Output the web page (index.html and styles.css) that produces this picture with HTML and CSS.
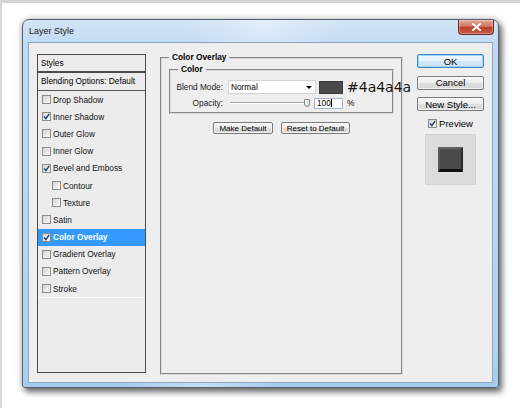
FILE: index.html
```html
<!DOCTYPE html>
<html lang="en">
<head>
<meta charset="utf-8">
<title>Layer Style</title>
<link rel="stylesheet" href="styles.css">
</head>
<body>
<div class="desk">
  <div class="window">
    <div class="titlebar">
      <span class="title">Layer Style</span>
      <button class="close" aria-label="Close">
        <svg width="11" height="8" viewBox="0 0 11 8"><path d="M2 1 L9 7 M9 1 L2 7" stroke="#fff" stroke-width="2" stroke-linecap="square"/></svg>
      </button>
    </div>
    <div class="client">
      <div class="styles">
        <div class="styles-head">Styles</div>
        <div class="styles-blend">Blending Options: Default</div>
        <ul class="effects">
          <li class="effect"><span class="check"></span>Drop Shadow</li>
          <li class="effect"><span class="check"><svg viewBox="0 0 7 7" width="7" height="7"><path d="M1 3.6 L2.9 5.6 L6.2 0.8" fill="none" stroke="#1d3f70" stroke-width="1.4"/></svg></span>Inner Shadow</li>
          <li class="effect"><span class="check"></span>Outer Glow</li>
          <li class="effect"><span class="check"></span>Inner Glow</li>
          <li class="effect"><span class="check"><svg viewBox="0 0 7 7" width="7" height="7"><path d="M1 3.6 L2.9 5.6 L6.2 0.8" fill="none" stroke="#1d3f70" stroke-width="1.4"/></svg></span>Bevel and Emboss</li>
          <li class="effect sub"><span class="check"></span>Contour</li>
          <li class="effect sub"><span class="check"></span>Texture</li>
          <li class="effect"><span class="check"></span>Satin</li>
          <li class="effect selected"><span class="check"><svg viewBox="0 0 7 7" width="7" height="7"><path d="M1 3.6 L2.9 5.6 L6.2 0.8" fill="none" stroke="#1d3f70" stroke-width="1.4"/></svg></span>Color Overlay</li>
          <li class="effect"><span class="check"></span>Gradient Overlay</li>
          <li class="effect"><span class="check"></span>Pattern Overlay</li>
          <li class="effect"><span class="check"></span>Stroke</li>
        </ul>
      </div>

      <fieldset class="group overlay">
        <legend>Color Overlay</legend>
        <fieldset class="group color">
          <legend>Color</legend>
          <div class="field">
            <span class="field-label">Blend Mode:</span>
            <div class="select"><span>Normal</span><span class="caret"></span></div>
            <span class="swatch"></span>
            <span class="hex">#4a4a4a</span>
          </div>
          <div class="field field-slim">
            <span class="field-label">Opacity:</span>
            <div class="slider"><span class="slider-track"></span><span class="slider-thumb"></span></div>
            <div class="num">100<span class="caret-line"></span></div>
            <span class="unit">%</span>
          </div>
        </fieldset>
        <div class="defaults">
          <button class="btn btn-make">Make Default</button>
          <button class="btn btn-reset">Reset to Default</button>
        </div>
      </fieldset>

      <div class="actions">
        <button class="btn btn-lg btn-default">OK</button>
        <button class="btn btn-lg">Cancel</button>
        <button class="btn btn-lg">New Style...</button>
        <label class="preview-toggle"><span class="check"><svg viewBox="0 0 7 7" width="7" height="7"><path d="M1 3.6 L2.9 5.6 L6.2 0.8" fill="none" stroke="#1d3f70" stroke-width="1.4"/></svg></span>Preview</label>
        <div class="preview"><span class="preview-chip"></span></div>
      </div>
    </div>
  </div>
</div>
</body>
</html>
```

FILE: styles.css
```css
* {
  box-sizing: border-box;
}

html,
body {
  margin: 0;
}

body {
  width: 520px;
  height: 408px;
  overflow: hidden;
  background: #fff;
  font-family: "Liberation Sans", Arial, sans-serif;
  font-size: 8.3px;
  color: #000;
}

.desk {
  height: 408px;
  border-top: 3px solid #d6d6d6;
  border-left: 2px solid #d6d6d6;
  padding: 16px 0 0 20px;
}

/* Aero window frame */
.window {
  width: 477px;
  height: 369px;
  display: flex;
  flex-direction: column;
  padding: 0 5px 4px;
  border: 1px solid #55616e;
  border-radius: 7px 7px 3px 3px;
  background:
    linear-gradient(100deg, rgba(255,255,255,0) 30%, rgba(255,255,255,.35) 45%, rgba(255,255,255,0) 60%),
    linear-gradient(#d3e4f5 0, #c2dbf3 22px, #b2d2f0 90%, #a6cbee 100%);
  box-shadow: 3px 4px 6px rgba(0,0,0,.55), 0 0 7px rgba(0,0,0,.25);
}

.titlebar {
  height: 22px;
  margin: 0 -5px;
  padding-left: 6px;
  display: flex;
  align-items: center;
}

.title {
  font-size: 9px;
  color: #1b1b1b;
}

.close {
  align-self: flex-start;
  margin-left: auto;
  margin-right: 4px;
  width: 36px;
  height: 15px;
  padding: 0;
  display: flex;
  align-items: center;
  justify-content: center;
  border: 1px solid #6a2a22;
  border-top: none;
  border-radius: 0 0 4px 4px;
  background: linear-gradient(#e6a896 0, #d17562 45%, #b7412b 52%, #c85b42 100%);
  box-shadow: inset 0 0 0 1px rgba(255,255,255,.3);
}

.client {
  flex: 1;
  display: flex;
  align-items: flex-start;
  padding: 11px 0 0 8px;
  border: 1px solid #8fa6bf;
  background: #eeeeee;
}

/* Styles list */
.styles {
  flex: none;
  width: 109px;
  height: 319px;
  border: 1px solid #4a4a4a;
  background: #ececec;
}

.styles-head {
  height: 18px;
  line-height: 16px;
  padding-left: 3px;
  border-bottom: 2px solid #4a4a4a;
}

.styles-blend {
  height: 18px;
  line-height: 17px;
  padding-left: 3px;
  border-bottom: 1px solid #5a5a5a;
}

.effects {
  list-style: none;
  margin: 0;
  padding: 0;
  border-bottom: 1px solid #fbfbfb;
}

.effect {
  height: 17.2px;
  display: flex;
  align-items: center;
  gap: 2px;
  padding-left: 4px;
  white-space: nowrap;
  color: #111;
}

.effect.sub {
  padding-left: 14px;
}

.effect.selected {
  background: #3399ff;
  color: #fff;
  font-weight: bold;
}

.check {
  flex: none;
  width: 9px;
  height: 9px;
  display: flex;
  align-items: center;
  justify-content: center;
  border: 1px solid #8c8c8c;
  background: linear-gradient(135deg, #d4d4d4, #fbfbfb);
}

.check svg {
  display: block;
}

/* Etched group boxes */
.group {
  margin: 0;
  min-width: 0;
  border: 2px groove #dadada;
}

.group > legend {
  padding: 0 3px;
  line-height: 11px;
  font-weight: bold;
}

.overlay {
  flex: none;
  width: 243px;
  height: 323px;
  margin: -2px 0 0 14px;
  padding: 0 7px;
}

.overlay > legend {
  margin-left: 0;
}

.color {
  margin-top: 1px;
  padding: 5px 0 3px;
}

.color > legend {
  margin-left: 7px;
}

.field {
  display: flex;
  align-items: center;
  height: 14px;
}

.field-slim {
  height: 12px;
  margin-top: 3px;
}

.field-label {
  flex: none;
  width: 52px;
  margin-right: 5px;
  text-align: right;
  color: #222;
}

.select {
  flex: none;
  width: 88px;
  height: 14px;
  display: flex;
  align-items: center;
  padding-left: 2px;
  border: 1px solid #d2d2d2;
  background: #fff;
}

.caret {
  margin-left: auto;
  margin-right: 3px;
  width: 0;
  height: 0;
  border-left: 3px solid transparent;
  border-right: 3px solid transparent;
  border-top: 3px solid #000;
}

.swatch {
  flex: none;
  width: 24px;
  height: 13px;
  margin-left: 3px;
  border: 1px solid #3c3c3c;
  background: #4a4a4a;
}

.hex {
  margin-left: 4px;
  font-family: "DejaVu Sans", sans-serif;
  font-size: 14px;
  line-height: 14px;
  white-space: nowrap;
  color: #151515;
}

.slider {
  flex: none;
  position: relative;
  width: 83px;
  height: 12px;
  margin-right: 3px;
}

.slider-track {
  position: absolute;
  left: 2px;
  right: 2px;
  top: 5px;
  height: 2px;
  border-top: 1px solid #a3a3a3;
  border-bottom: 1px solid #fff;
}

.slider-thumb {
  position: absolute;
  left: 76px;
  top: 2px;
  width: 6px;
  height: 8px;
  border: 1px solid #868686;
  border-radius: 1px 1px 3px 3px;
  background: linear-gradient(90deg, #fdfdfd, #d8d8d8);
}

.num {
  flex: none;
  width: 29px;
  height: 11px;
  padding-left: 2px;
  line-height: 9px;
  border: 1px solid #a3b5c8;
  background: #fff;
}

.caret-line {
  display: inline-block;
  width: 1px;
  height: 8px;
  vertical-align: -1px;
  background: #000;
}

.unit {
  margin-left: 4px;
}

/* Buttons */
.btn {
  padding: 0;
  font-family: "Liberation Sans", Arial, sans-serif;
  font-size: 8px;
  color: #000;
  border: 1px solid #7a7a7a;
  border-radius: 2px;
  background: linear-gradient(#f7f7f7, #ececec 50%, #dedede 51%, #d9d9d9);
  box-shadow: inset 0 0 0 1px rgba(255,255,255,.6);
}

.defaults {
  display: flex;
  justify-content: center;
  gap: 8px;
  margin-top: 8px;
}

.btn-make {
  width: 60px;
  height: 12px;
}

.btn-reset {
  width: 69px;
  height: 12px;
}

.actions {
  flex: none;
  width: 67px;
  margin-left: 14px;
  display: flex;
  flex-direction: column;
  align-items: center;
}

.btn-lg {
  width: 67px;
  height: 14px;
  margin-bottom: 7.5px;
  font-size: 9.5px;
}

.btn-default {
  border-color: #3c87c6;
  background: linear-gradient(#f1f8fd, #e3f0fa 50%, #d3e7f6 51%, #cbe3f5);
  box-shadow: inset 0 0 0 1px #9bd6f7;
}

.preview-toggle {
  height: 12px;
  margin-top: -1.5px;
  display: flex;
  align-items: center;
  gap: 2px;
  font-size: 9.5px;
}

.preview {
  width: 51px;
  height: 51px;
  margin-top: 5px;
  display: flex;
  align-items: center;
  justify-content: center;
  border: 1px solid #d2d2d2;
  background: #dcdcdc;
}

.preview-chip {
  width: 25px;
  height: 25px;
  background: #4a4a4a;
  border-top: 2px solid #646464;
  border-left: 2px solid #585858;
  border-right: 2px solid #2a2a2a;
  border-bottom: 3px solid #111;
}
```
